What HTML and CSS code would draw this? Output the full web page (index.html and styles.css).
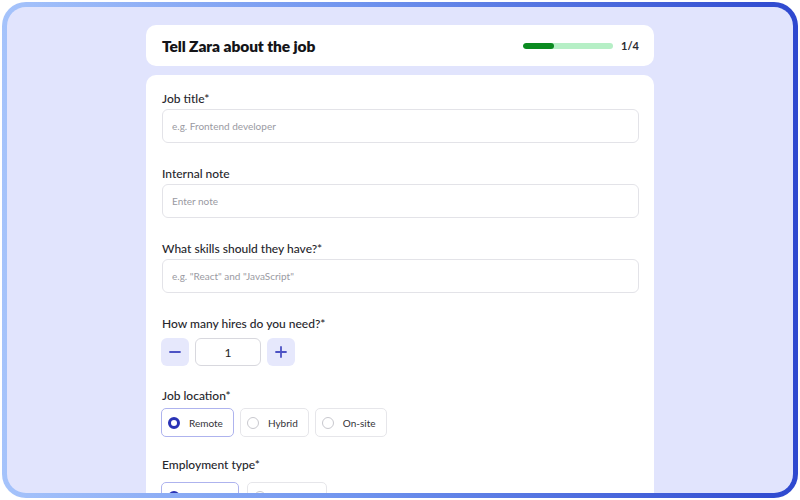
FILE: index.html
```html
<!DOCTYPE html>
<html lang="en">
<head>
<meta charset="utf-8">
<title>Tell Zara about the job</title>
<link rel="stylesheet" href="styles.css">
</head>
<body>
<div class="frame">
  <div class="content">
    <header class="head-card">
      <h1 class="title">Tell Zara about the job</h1>
      <div class="progress">
        <div class="bar"><div class="bar-fill" style="width:34%"></div></div>
        <span class="step">1/4</span>
      </div>
    </header>
    <main class="form-card">
      <div class="field">
        <label class="label">Job title*</label>
        <div class="input"><span class="placeholder">e.g. Frontend developer</span></div>
      </div>
      <div class="field">
        <label class="label">Internal note</label>
        <div class="input"><span class="placeholder">Enter note</span></div>
      </div>
      <div class="field">
        <label class="label">What skills should they have?*</label>
        <div class="input"><span class="placeholder">e.g. "React" and "JavaScript"</span></div>
      </div>
      <div class="field">
        <label class="label">How many hires do you need?*</label>
        <div class="stepper">
          <button class="step-btn" aria-label="decrease">
            <svg width="12" height="12" viewBox="0 0 12 12"><path d="M1 6h10" stroke="#4c52c4" stroke-width="1.8" stroke-linecap="round"/></svg>
          </button>
          <div class="count">1</div>
          <button class="step-btn" aria-label="increase">
            <svg width="12" height="12" viewBox="0 0 12 12"><path d="M1 6h10M6 1v10" stroke="#4c52c4" stroke-width="1.8" stroke-linecap="round"/></svg>
          </button>
        </div>
      </div>
      <div class="field field-tight">
        <label class="label">Job location*</label>
        <div class="chips">
          <div class="chip selected"><span class="radio"></span>Remote</div>
          <div class="chip"><span class="radio"></span>Hybrid</div>
          <div class="chip"><span class="radio"></span>On-site</div>
        </div>
      </div>
      <div class="field field-tight2">
        <label class="label">Employment type*</label>
        <div class="chips chips-low">
          <div class="chip selected"><span class="radio"></span>Full-time</div>
          <div class="chip"><span class="radio"></span>Part-time</div>
        </div>
      </div>
    </main>
  </div>
</div>
</body>
</html>
```

FILE: styles.css
```css
* { box-sizing: border-box; }
html, body { margin: 0; padding: 0; background: #ffffff; }
body { font-family: "Lato", "Inter", "Liberation Sans", sans-serif; color: #1d1d22; }

.frame {
  margin: 2px;
  height: 496px;
  border: 5px solid transparent;
  border-radius: 24px;
  background:
    linear-gradient(#e1e4fd, #e1e4fd) padding-box,
    linear-gradient(90deg, #a5c3fb 0%, #6f93ee 45%, #2e48cf 100%) border-box;
  overflow: hidden;
}

.content {
  width: 508px;
  margin: 0 auto;
  padding-top: 18px;
  display: flex;
  flex-direction: column;
  gap: 9px;
}

.head-card {
  height: 41px;
  background: #fff;
  border-radius: 10px;
  padding: 0 15px 0 16px;
  display: flex;
  align-items: center;
  justify-content: space-between;
}
.title {
  margin: 0;
  font-size: 15.5px;
  font-weight: 800;
  letter-spacing: -0.1px;
  color: #141418;
}
.progress { display: flex; align-items: center; gap: 8px; }
.bar {
  width: 90px;
  height: 6px;
  border-radius: 3px;
  background: #b6efc6;
  overflow: hidden;
}
.bar-fill { height: 100%; background: #0b8a20; border-radius: 3px; }
.step { font-size: 11px; font-weight: 700; color: #2a2a30; }

.form-card {
  background: #fff;
  border-radius: 10px 10px 0 0;
  padding: 16px 15px 30px 16px;
  min-height: 440px;
  display: flex;
  flex-direction: column;
  gap: 23px;
}
.field { display: flex; flex-direction: column; }
.field-tight { margin-top: -1px; }
.field-tight2 { margin-top: -3px; }
.label {
  font-size: 12px;
  line-height: 16px;
  font-weight: 500;
  color: #26262c;
  margin-bottom: 2px;
}
.input {
  height: 34px;
  border: 1px solid #e3e3e8;
  border-radius: 6px;
  display: flex;
  align-items: center;
  padding: 0 9px;
}
.placeholder { font-size: 10px; color: #9a9aa2; }

.stepper { display: flex; gap: 6px; margin-top: 4px; margin-left: -1px; }
.step-btn {
  width: 28px;
  height: 28px;
  border: none;
  border-radius: 6px;
  background: #e6e8fc;
  display: flex;
  align-items: center;
  justify-content: center;
  padding: 0;
}
.count {
  width: 66px;
  height: 28px;
  border: 1px solid #d8d8de;
  border-radius: 6px;
  display: flex;
  align-items: center;
  justify-content: center;
  font-size: 12px;
  color: #222;
}

.chips { display: flex; gap: 6px; margin-top: 2px; margin-left: -1px; }
.chips-low { margin-top: 7px; gap: 8px; }
.chip {
  height: 29px;
  border: 1px solid #e6e6ea;
  border-radius: 5px;
  display: flex;
  align-items: center;
  gap: 9px;
  padding: 0 10px 0 6px;
  font-size: 10px;
  color: #333338;
}
.chip.selected { border-color: #aeb3ee; }
.radio {
  width: 12px;
  height: 12px;
  border-radius: 50%;
  border: 1px solid #c8c8ce;
  background: #fff;
}
.chip.selected .radio { border: 3.5px solid #2a33b5; }
```
